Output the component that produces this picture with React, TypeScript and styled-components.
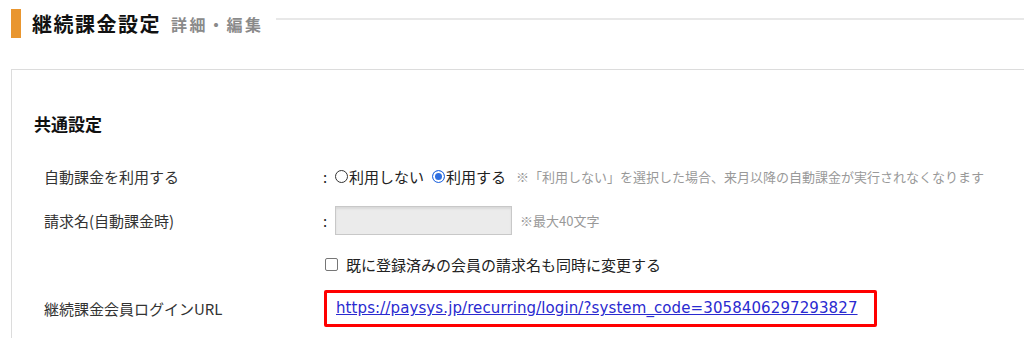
import React from 'react';
import styled, { createGlobalStyle } from 'styled-components';

const GlobalStyle = createGlobalStyle`
  html, body {
    margin: 0;
    padding: 0;
    background: #ffffff;
    overflow: hidden;
  }
  body {
    font-family: "Noto Sans CJK JP", "DejaVu Sans", sans-serif;
    color: #333333;
  }
`;

const Page = styled.div`
  width: 1024px;
  height: 338px;
  overflow: hidden;
`;

const Header = styled.div`
  display: flex;
  align-items: center;
  height: 29px;
  padding: 9px 0 0 11px;
`;

const Accent = styled.div`
  width: 10px;
  height: 29px;
  background: #e9962f;
  flex: none;
`;

const Title = styled.h1`
  margin: 0 0 0 11px;
  font-size: 20px;
  font-weight: 700;
  color: #111111;
  letter-spacing: 1.5px;
  line-height: 1;
  white-space: nowrap;
`;

const SubTitle = styled.span`
  margin-left: 10px;
  font-size: 16px;
  font-weight: 700;
  color: #8a8a8a;
  letter-spacing: 2.5px;
  white-space: nowrap;
`;

const Rule = styled.div`
  flex: 1;
  margin-left: 12px;
  height: 0;
  border-top: 2px solid #e8e8e8;
  align-self: flex-start;
  margin-top: 9px;
`;

const Panel = styled.section`
  margin: 31px -20px 0 11px;
  border: 1px solid #dcdcdc;
  padding: 42px 0 0 22px;
  height: 400px;
`;

const SectionTitle = styled.h2`
  margin: 0 0 18px;
  font-size: 17px;
  font-weight: 700;
  color: #111111;
  line-height: 24px;
`;

const Form = styled.div`
  display: grid;
  grid-template-columns: 279px 1fr;
  grid-auto-rows: 44px;
  padding-left: 10px;
  align-items: center;
`;

const Label = styled.div`
  font-size: 15px;
  color: #333333;
  white-space: nowrap;
`;

const Value = styled.div`
  display: flex;
  align-items: center;
  font-size: 15px;
  color: #222222;
  white-space: nowrap;
`;

const Colon = styled.span`
  width: 12px;
  flex: none;
`;

const RadioDot = styled.span<{ $checked?: boolean }>`
  box-sizing: border-box;
  display: inline-block;
  width: 13px;
  height: 13px;
  border-radius: 50%;
  border: ${p => (p.$checked ? '1px solid #2f6fe0' : '1px solid #333333')};
  background: ${p => (p.$checked ? '#2f6fe0' : '#ffffff')};
  box-shadow: ${p => (p.$checked ? 'inset 0 0 0 2px #ffffff' : 'none')};
  margin-right: 1px;
`;

const RadioItem = styled.label`
  display: inline-flex;
  align-items: center;
  margin-right: 8px;
  font-size: 15px;
`;

const Note = styled.span<{ $gap?: number }>`
  margin-left: ${p => p.$gap ?? 2}px;
  font-size: 13px;
  color: #999999;
`;

const TextBox = styled.div`
  box-sizing: border-box;
  width: 177px;
  height: 29px;
  background: #ebebeb;
  border: 1px solid #c8c8c8;
  box-shadow: inset 0 2px 2px rgba(0, 0, 0, 0.08);
`;

const CheckBox = styled.span`
  box-sizing: border-box;
  display: inline-block;
  width: 13px;
  height: 13px;
  border: 1px solid #767676;
  border-radius: 2px;
  margin: 0 8px 0 2px;
`;

const Highlight = styled.div`
  box-sizing: border-box;
  margin-left: 1px;
  width: 553px;
  height: 37px;
  border: 3px solid #ff0000;
  border-radius: 2px;
  display: flex;
  align-items: center;
  padding-left: 9px;
`;

const Link = styled.a`
  font-family: "DejaVu Sans", "Noto Sans CJK JP", sans-serif;
  font-size: 15px;
  letter-spacing: 0.1px;
  color: #2a2ad0;
  text-decoration: underline;
`;

const Empty = styled.div``;

const App = () => (
  <Page>
    <GlobalStyle />
    <Header>
      <Accent />
      <Title>継続課金設定</Title>
      <SubTitle>詳細・編集</SubTitle>
      <Rule />
    </Header>
    <Panel>
      <SectionTitle>共通設定</SectionTitle>
      <Form>
        <Label>自動課金を利用する</Label>
        <Value>
          <Colon>:</Colon>
          <RadioItem><RadioDot />利用しない</RadioItem>
          <RadioItem><RadioDot $checked />利用する</RadioItem>
          <Note>※「利用しない」を選択した場合、来月以降の自動課金が実行されなくなります</Note>
        </Value>

        <Label>請求名(自動課金時)</Label>
        <Value>
          <Colon>:</Colon>
          <TextBox />
          <Note $gap={8}>※最大40文字</Note>
        </Value>

        <Empty />
        <Value>
          <CheckBox />
          既に登録済みの会員の請求名も同時に変更する
        </Value>

        <Label>継続課金会員ログインURL</Label>
        <Value>
          <Highlight>
            <Link href="#">https://paysys.jp/recurring/login/?system_code=3058406297293827</Link>
          </Highlight>
        </Value>
      </Form>
    </Panel>
  </Page>
);

export default App;
